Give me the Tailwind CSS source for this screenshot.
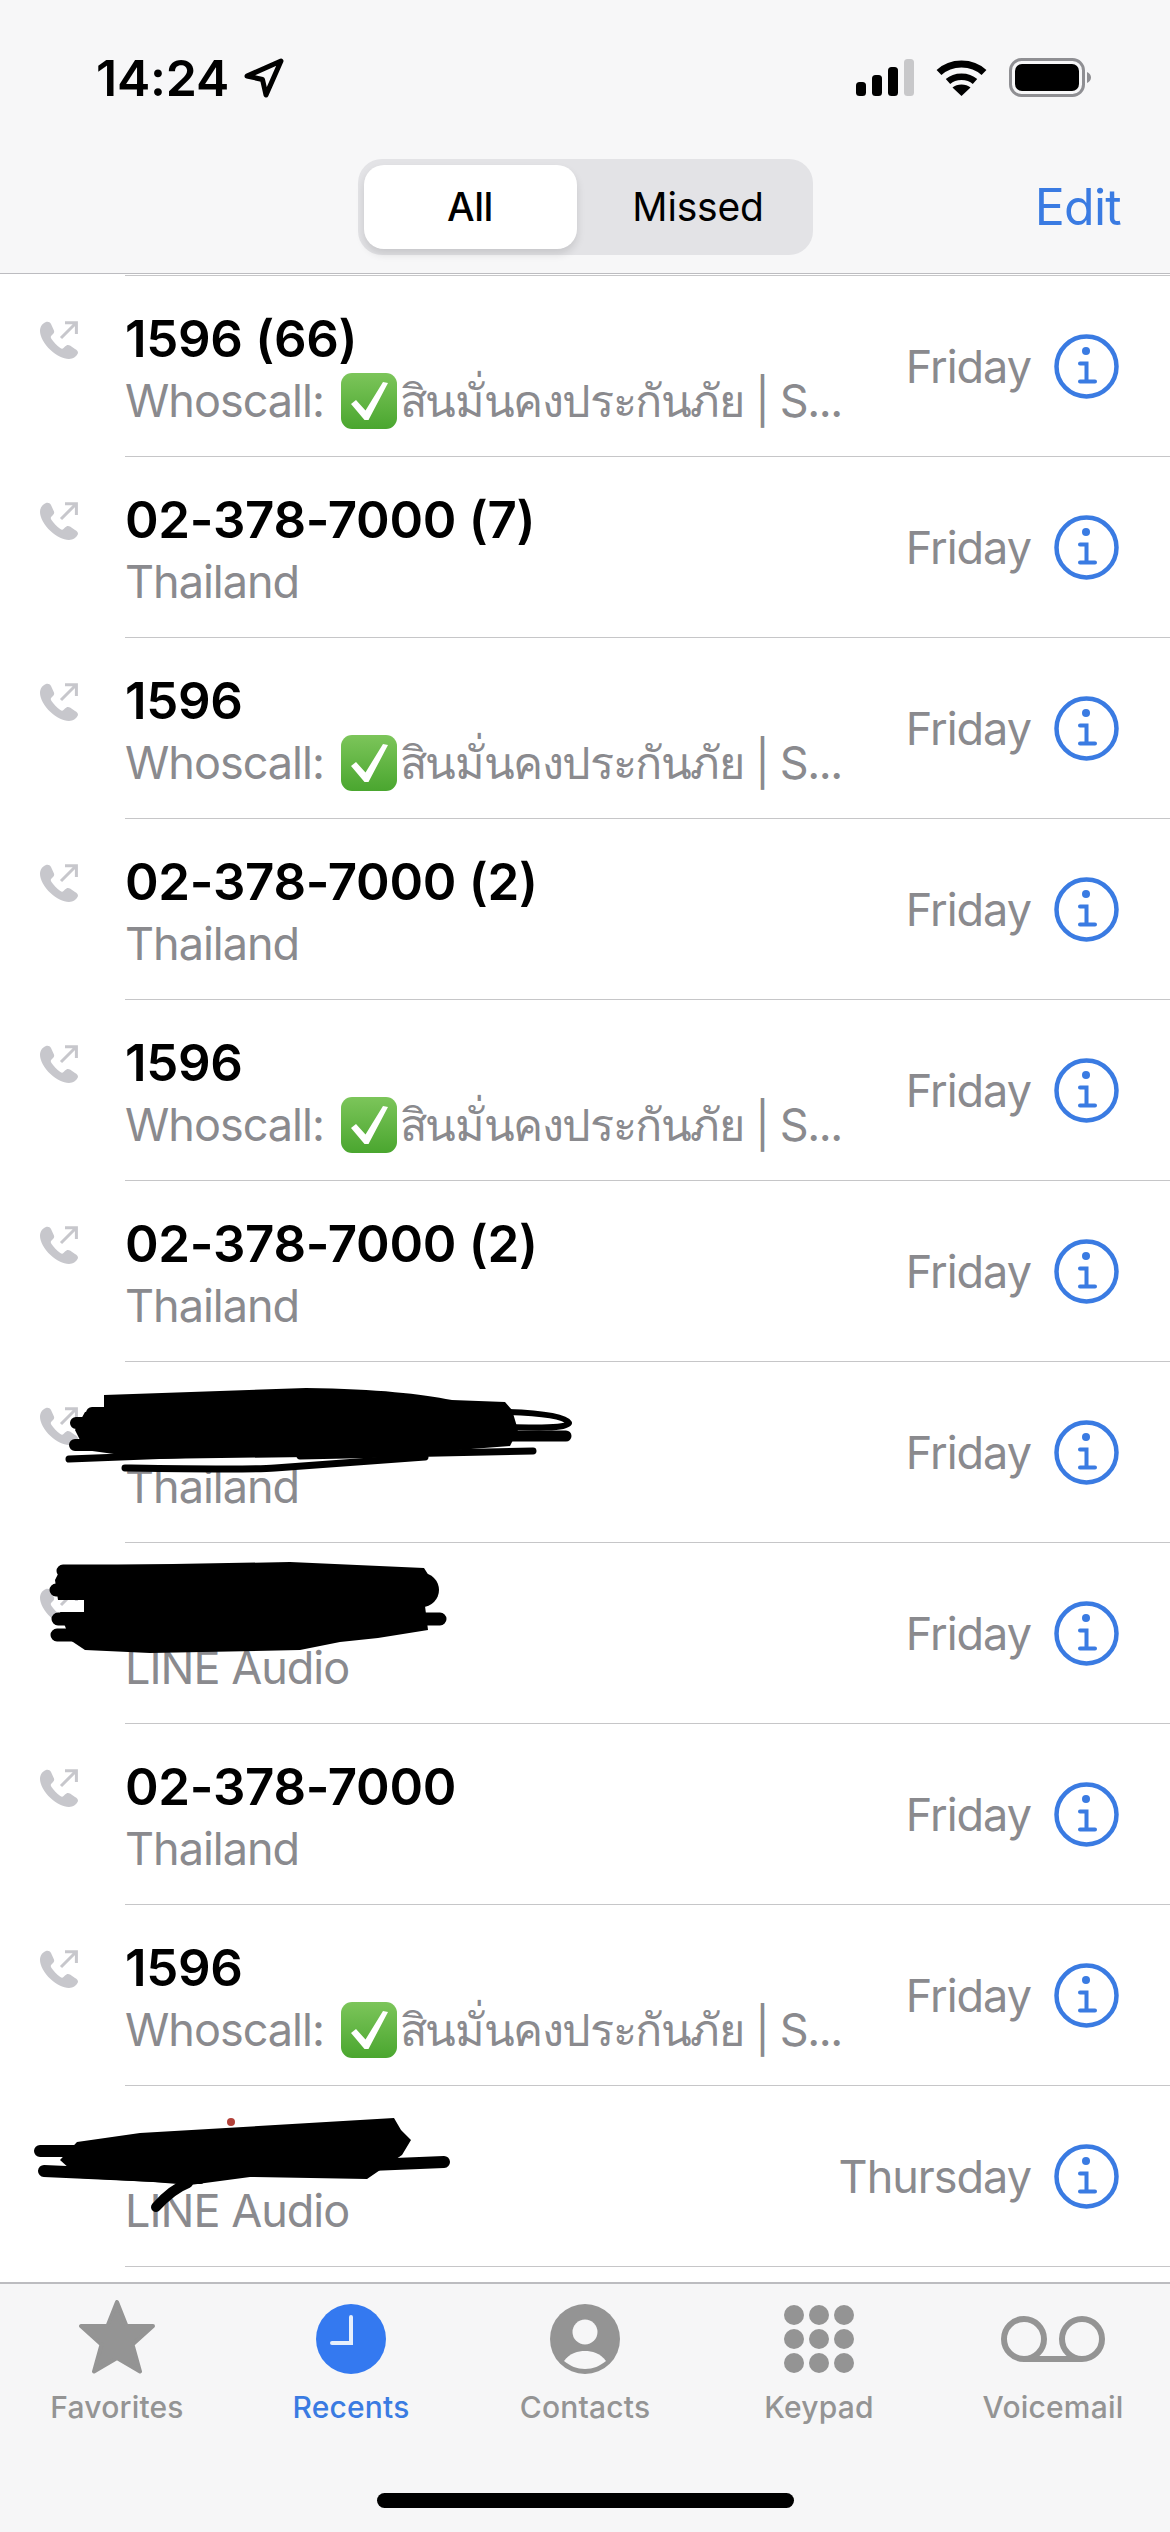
<!DOCTYPE html>
<html lang="en">
<head>
<meta charset="utf-8">
<title>Recents</title>
<script src="https://cdn.jsdelivr.net/npm/@tailwindcss/browser@4"></script>
</head>
<body class="m-0 bg-white">
<svg width="0" height="0" class="absolute">
  <defs>
    <symbol id="phone" viewBox="0 0 38 38">
      <path fill="#c7c7cc" d="M6 1C3 2 0 5 0 10C0 15 4 23 10.500 29C16.500 34.500 23 38 29 38C33 38 37 35 38 32C38 30 37 29 35 28L30 24.500C28 23.500 26.500 24 25 25.500L23.500 27C22.500 28 21.500 27.800 20 26.800C17 24.500 13.500 21 11.500 18C10.500 16.500 10.500 15.500 11.500 14.500L13 13C14.500 11.500 14.500 10 13.500 8.500L11 3C10 1 8 0.500 6 1Z"/>
      <path fill="none" stroke="#c7c7cc" stroke-width="3" d="M21 17L36 2M25 1.700H36.400V13"/>
    </symbol>
    <symbol id="info" viewBox="0 0 65 65">
      <circle cx="32.500" cy="32.500" r="30" fill="none" stroke="#3a7be2" stroke-width="4.500"/>
      <circle cx="32" cy="17" r="4" fill="#3a7be2"/>
      <path fill="none" stroke="#3a7be2" stroke-width="4" stroke-linecap="round" d="M26 29.500H32.500V47.500M26 47.500H41"/>
    </symbol>
    <symbol id="check" viewBox="0 0 56 56">
      <defs><linearGradient id="g" x1="0" y1="0" x2="0" y2="1"><stop offset="0" stop-color="#7cc55a"/><stop offset="1" stop-color="#4aa62f"/></linearGradient></defs>
      <rect width="56" height="56" rx="11" fill="url(#g)"/>
      <path fill="#fff" d="M10 31L15 27L24.500 37.500L42 9L47 10L27.500 47H23.500Z"/>
    </symbol>
  </defs>
</svg>

<div class="relative flex h-[2532px] w-[1170px] flex-col overflow-hidden bg-white font-['Inter','Noto_Sans','DejaVu_Sans',sans-serif] text-black">

  <header class="h-[274px] shrink-0 border-b border-[#bcbcc0] bg-[#f7f7f8]">
    <div class="flex h-[159px] items-start justify-between pt-[52px] pr-[79px] pl-[96px]">
      <div class="flex items-center gap-[15px]">
        <span class="text-[50px] leading-[52px] font-semibold tracking-[-0.2px]">14:24</span>
        <svg class="h-[40px] w-[40px]" viewBox="0 0 40 40"><path fill="none" stroke="#000" stroke-width="5" stroke-linejoin="round" d="M3 18L37 3L22 37L18.500 21.500Z"/></svg>
      </div>
      <div class="flex items-center gap-[22px] pt-[6px]">
        <svg class="h-[37px] w-[58px]" viewBox="0 0 58 37">
          <rect x="0" y="23" width="10" height="14" rx="3.500" fill="#000"/>
          <rect x="16" y="16" width="10" height="21" rx="3.500" fill="#000"/>
          <rect x="32" y="8" width="10" height="29" rx="3.500" fill="#000"/>
          <rect x="48" y="0" width="10" height="37" rx="3.500" fill="#c8c8ca"/>
        </svg>
        <svg class="h-[37px] w-[51px]" viewBox="0 0 51 37">
          <path fill="none" stroke="#000" stroke-width="7" d="M3 13.500C15 2 36 2 48 13.500"/>
          <path fill="none" stroke="#000" stroke-width="6.500" d="M12 22.500C19 16 32 16 39 22.500"/>
          <path fill="#000" d="M25.500 37L16.500 28.500C21 24.500 30 24.500 34.500 28.500Z"/>
        </svg>
        <svg class="h-[39px] w-[82px]" viewBox="0 0 82 39">
          <rect x="1.500" y="1.500" width="73" height="36" rx="11" fill="none" stroke="#8f8f93" stroke-width="3"/>
          <rect x="6" y="6" width="64" height="27" rx="7" fill="#000"/>
          <path fill="#8f8f93" d="M78 14C80.500 15 82 17 82 19.500C82 22 80.500 24 78 25Z"/>
        </svg>
      </div>
    </div>
    <nav class="relative flex h-[96px] items-center justify-center">
      <div class="flex h-[96px] w-[455px] rounded-[24px] bg-[#e3e3e6] p-[6px]">
        <div class="flex w-[213px] items-center justify-center rounded-[20px] bg-white text-[39px] font-medium tracking-[-0.5px] shadow-[0_5px_8px_rgba(0,0,0,0.12)]">All</div>
        <div class="flex flex-1 items-center justify-center pl-[13px] text-[39px] tracking-[-0.2px]">Missed</div>
      </div>
      <span class="absolute top-[18px] right-[49px] text-[50px] leading-[60px] tracking-[-0.7px] text-[#3a7be2]">Edit</span>
    </nav>
  </header>

  <main class="h-[2008px] shrink-0 bg-white pt-px">
    <!-- row 1 -->
    <div class="flex h-[181px]">
      <div class="w-[125px] shrink-0 pt-[46px] pl-[40px]"><svg class="h-[38px] w-[38px]"><use href="#phone"/></svg></div>
      <div class="flex min-w-0 flex-1 items-center border-t border-[#c6c6c8] pr-[51px]">
        <div class="min-w-0 flex-1 pt-[5px]">
          <div class="text-[51px] leading-[62px] font-semibold tracking-[-0.3px]">1596 (66)</div>
          <div class="mt-[2px] flex h-[58px] items-center text-[45px] tracking-[-1px] whitespace-nowrap text-[#8a8a8e]">Whoscall:<svg class="mr-[3px] ml-[17px] h-[56px] w-[56px] shrink-0"><use href="#check"/></svg><span class="tracking-[-1.4px]">สินมั่นคงประกันภัย | S...</span></div>
        </div>
        <span class="pt-[2px] text-[45px] tracking-[-1px] text-[#8a8a8e]">Friday</span>
        <svg class="ml-[23px] h-[65px] w-[65px] shrink-0"><use href="#info"/></svg>
      </div>
    </div>
    <!-- row 2 -->
    <div class="flex h-[181px]">
      <div class="w-[125px] shrink-0 pt-[46px] pl-[40px]"><svg class="h-[38px] w-[38px]"><use href="#phone"/></svg></div>
      <div class="flex min-w-0 flex-1 items-center border-t border-[#c6c6c8] pr-[51px]">
        <div class="min-w-0 flex-1 pt-[5px]">
          <div class="text-[51px] leading-[62px] font-semibold tracking-[-0.3px]">02-378-7000 (7)</div>
          <div class="mt-[2px] flex h-[58px] items-center text-[45px] tracking-[-1px] whitespace-nowrap text-[#8a8a8e]">Thailand</div>
        </div>
        <span class="pt-[2px] text-[45px] tracking-[-1px] text-[#8a8a8e]">Friday</span>
        <svg class="ml-[23px] h-[65px] w-[65px] shrink-0"><use href="#info"/></svg>
      </div>
    </div>
    <!-- row 3 -->
    <div class="flex h-[181px]">
      <div class="w-[125px] shrink-0 pt-[46px] pl-[40px]"><svg class="h-[38px] w-[38px]"><use href="#phone"/></svg></div>
      <div class="flex min-w-0 flex-1 items-center border-t border-[#c6c6c8] pr-[51px]">
        <div class="min-w-0 flex-1 pt-[5px]">
          <div class="text-[51px] leading-[62px] font-semibold tracking-[-0.3px]">1596</div>
          <div class="mt-[2px] flex h-[58px] items-center text-[45px] tracking-[-1px] whitespace-nowrap text-[#8a8a8e]">Whoscall:<svg class="mr-[3px] ml-[17px] h-[56px] w-[56px] shrink-0"><use href="#check"/></svg><span class="tracking-[-1.4px]">สินมั่นคงประกันภัย | S...</span></div>
        </div>
        <span class="pt-[2px] text-[45px] tracking-[-1px] text-[#8a8a8e]">Friday</span>
        <svg class="ml-[23px] h-[65px] w-[65px] shrink-0"><use href="#info"/></svg>
      </div>
    </div>
    <!-- row 4 -->
    <div class="flex h-[181px]">
      <div class="w-[125px] shrink-0 pt-[46px] pl-[40px]"><svg class="h-[38px] w-[38px]"><use href="#phone"/></svg></div>
      <div class="flex min-w-0 flex-1 items-center border-t border-[#c6c6c8] pr-[51px]">
        <div class="min-w-0 flex-1 pt-[5px]">
          <div class="text-[51px] leading-[62px] font-semibold tracking-[-0.3px]">02-378-7000 (2)</div>
          <div class="mt-[2px] flex h-[58px] items-center text-[45px] tracking-[-1px] whitespace-nowrap text-[#8a8a8e]">Thailand</div>
        </div>
        <span class="pt-[2px] text-[45px] tracking-[-1px] text-[#8a8a8e]">Friday</span>
        <svg class="ml-[23px] h-[65px] w-[65px] shrink-0"><use href="#info"/></svg>
      </div>
    </div>
    <!-- row 5 -->
    <div class="flex h-[181px]">
      <div class="w-[125px] shrink-0 pt-[46px] pl-[40px]"><svg class="h-[38px] w-[38px]"><use href="#phone"/></svg></div>
      <div class="flex min-w-0 flex-1 items-center border-t border-[#c6c6c8] pr-[51px]">
        <div class="min-w-0 flex-1 pt-[5px]">
          <div class="text-[51px] leading-[62px] font-semibold tracking-[-0.3px]">1596</div>
          <div class="mt-[2px] flex h-[58px] items-center text-[45px] tracking-[-1px] whitespace-nowrap text-[#8a8a8e]">Whoscall:<svg class="mr-[3px] ml-[17px] h-[56px] w-[56px] shrink-0"><use href="#check"/></svg><span class="tracking-[-1.4px]">สินมั่นคงประกันภัย | S...</span></div>
        </div>
        <span class="pt-[2px] text-[45px] tracking-[-1px] text-[#8a8a8e]">Friday</span>
        <svg class="ml-[23px] h-[65px] w-[65px] shrink-0"><use href="#info"/></svg>
      </div>
    </div>
    <!-- row 6 -->
    <div class="flex h-[181px]">
      <div class="w-[125px] shrink-0 pt-[46px] pl-[40px]"><svg class="h-[38px] w-[38px]"><use href="#phone"/></svg></div>
      <div class="flex min-w-0 flex-1 items-center border-t border-[#c6c6c8] pr-[51px]">
        <div class="min-w-0 flex-1 pt-[5px]">
          <div class="text-[51px] leading-[62px] font-semibold tracking-[-0.3px]">02-378-7000 (2)</div>
          <div class="mt-[2px] flex h-[58px] items-center text-[45px] tracking-[-1px] whitespace-nowrap text-[#8a8a8e]">Thailand</div>
        </div>
        <span class="pt-[2px] text-[45px] tracking-[-1px] text-[#8a8a8e]">Friday</span>
        <svg class="ml-[23px] h-[65px] w-[65px] shrink-0"><use href="#info"/></svg>
      </div>
    </div>
    <!-- row 7 (name scribbled out) -->
    <div class="flex h-[181px]">
      <div class="w-[125px] shrink-0 pt-[46px] pl-[40px]"><svg class="h-[38px] w-[38px]"><use href="#phone"/></svg></div>
      <div class="flex min-w-0 flex-1 items-center border-t border-[#c6c6c8] pr-[51px]">
        <div class="min-w-0 flex-1 pt-[5px]">
          <div class="h-[62px]"></div>
          <div class="mt-[2px] flex h-[58px] items-center text-[45px] tracking-[-1px] whitespace-nowrap text-[#8a8a8e]">Thailand</div>
        </div>
        <span class="pt-[2px] text-[45px] tracking-[-1px] text-[#8a8a8e]">Friday</span>
        <svg class="ml-[23px] h-[65px] w-[65px] shrink-0"><use href="#info"/></svg>
      </div>
    </div>
    <!-- row 8 (name scribbled out) -->
    <div class="flex h-[181px]">
      <div class="w-[125px] shrink-0 pt-[46px] pl-[40px]"><svg class="h-[38px] w-[38px]"><use href="#phone"/></svg></div>
      <div class="flex min-w-0 flex-1 items-center border-t border-[#c6c6c8] pr-[51px]">
        <div class="min-w-0 flex-1 pt-[5px]">
          <div class="h-[62px]"></div>
          <div class="mt-[2px] flex h-[58px] items-center text-[45px] tracking-[-1px] whitespace-nowrap text-[#8a8a8e]">LINE Audio</div>
        </div>
        <span class="pt-[2px] text-[45px] tracking-[-1px] text-[#8a8a8e]">Friday</span>
        <svg class="ml-[23px] h-[65px] w-[65px] shrink-0"><use href="#info"/></svg>
      </div>
    </div>
    <!-- row 9 -->
    <div class="flex h-[181px]">
      <div class="w-[125px] shrink-0 pt-[46px] pl-[40px]"><svg class="h-[38px] w-[38px]"><use href="#phone"/></svg></div>
      <div class="flex min-w-0 flex-1 items-center border-t border-[#c6c6c8] pr-[51px]">
        <div class="min-w-0 flex-1 pt-[5px]">
          <div class="text-[51px] leading-[62px] font-semibold tracking-[-0.3px]">02-378-7000</div>
          <div class="mt-[2px] flex h-[58px] items-center text-[45px] tracking-[-1px] whitespace-nowrap text-[#8a8a8e]">Thailand</div>
        </div>
        <span class="pt-[2px] text-[45px] tracking-[-1px] text-[#8a8a8e]">Friday</span>
        <svg class="ml-[23px] h-[65px] w-[65px] shrink-0"><use href="#info"/></svg>
      </div>
    </div>
    <!-- row 10 -->
    <div class="flex h-[181px]">
      <div class="w-[125px] shrink-0 pt-[46px] pl-[40px]"><svg class="h-[38px] w-[38px]"><use href="#phone"/></svg></div>
      <div class="flex min-w-0 flex-1 items-center border-t border-[#c6c6c8] pr-[51px]">
        <div class="min-w-0 flex-1 pt-[5px]">
          <div class="text-[51px] leading-[62px] font-semibold tracking-[-0.3px]">1596</div>
          <div class="mt-[2px] flex h-[58px] items-center text-[45px] tracking-[-1px] whitespace-nowrap text-[#8a8a8e]">Whoscall:<svg class="mr-[3px] ml-[17px] h-[56px] w-[56px] shrink-0"><use href="#check"/></svg><span class="tracking-[-1.4px]">สินมั่นคงประกันภัย | S...</span></div>
        </div>
        <span class="pt-[2px] text-[45px] tracking-[-1px] text-[#8a8a8e]">Friday</span>
        <svg class="ml-[23px] h-[65px] w-[65px] shrink-0"><use href="#info"/></svg>
      </div>
    </div>
    <!-- row 11 (name scribbled out) -->
    <div class="flex h-[181px]">
      <div class="w-[125px] shrink-0"></div>
      <div class="flex min-w-0 flex-1 items-center border-t border-[#c6c6c8] pr-[51px]">
        <div class="min-w-0 flex-1 pt-[5px]">
          <div class="h-[62px]"></div>
          <div class="mt-[2px] flex h-[58px] items-center text-[45px] tracking-[-1px] whitespace-nowrap text-[#8a8a8e]">LINE Audio</div>
        </div>
        <span class="pt-[2px] text-[45px] tracking-[-1px] text-[#8a8a8e]">Thursday</span>
        <svg class="ml-[23px] h-[65px] w-[65px] shrink-0"><use href="#info"/></svg>
      </div>
    </div>
    <div class="ml-[125px] border-t border-[#c6c6c8]"></div>
  </main>

  <footer class="relative h-[250px] shrink-0 border-t-2 border-[#bcbcc0] bg-[#f6f6f7]">
    <div class="grid grid-cols-5 text-[30px] font-medium tracking-[0.2px] text-[#949494]">
      <div class="flex flex-col items-center">
        <svg class="mt-[16px] h-[74px] w-[76px]" viewBox="0 0 76 74"><path fill="#949494" stroke="#949494" stroke-width="4" stroke-linejoin="round" d="M38 2L47.500 26H74L53.500 44.500L61 71.500L38 58L15 71.500L22.500 44.500L2 26H28.500Z"/></svg>
        <span class="mt-[15px] leading-[36px]">Favorites</span>
      </div>
      <div class="flex flex-col items-center text-[#3a7be2]">
        <svg class="mt-[20px] h-[70px] w-[70px]" viewBox="0 0 70 70"><circle cx="35" cy="35" r="35" fill="#3479f0"/><path fill="none" stroke="#e6effc" stroke-width="4" stroke-linecap="round" d="M35 13V39H16"/></svg>
        <span class="mt-[15px] leading-[36px]">Recents</span>
      </div>
      <div class="flex flex-col items-center">
        <svg class="mt-[20px] h-[70px] w-[70px]" viewBox="0 0 70 70"><circle cx="35" cy="35" r="35" fill="#949494"/><circle cx="35" cy="28" r="12.500" fill="#f6f6f7"/><path fill="#f6f6f7" d="M14 57C20 49 28 47 35 47C42 47 50 49 56 57C50 62 43 65 35 65C27 65 20 62 14 57Z"/></svg>
        <span class="mt-[15px] leading-[36px]">Contacts</span>
      </div>
      <div class="flex flex-col items-center">
        <svg class="mt-[20px] h-[70px] w-[70px]" viewBox="0 0 70 70" fill="#949494">
          <circle cx="10" cy="11" r="10"/><circle cx="35" cy="11" r="10"/><circle cx="60" cy="11" r="10"/>
          <circle cx="10" cy="35" r="10"/><circle cx="35" cy="35" r="10"/><circle cx="60" cy="35" r="10"/>
          <circle cx="10" cy="59" r="10"/><circle cx="35" cy="59" r="10"/><circle cx="60" cy="59" r="10"/>
        </svg>
        <span class="mt-[15px] leading-[36px]">Keypad</span>
      </div>
      <div class="flex flex-col items-center">
        <svg class="mt-[20px] h-[70px] w-[104px]" viewBox="0 0 104 70"><g fill="none" stroke="#949494" stroke-width="6"><circle cx="23" cy="35" r="20"/><circle cx="81" cy="35" r="20"/><path d="M23 55H81"/></g></svg>
        <span class="mt-[15px] leading-[36px]">Voicemail</span>
      </div>
    </div>
    <div class="absolute top-[209px] left-[377px] h-[15px] w-[417px] rounded-full bg-black"></div>
  </footer>

  <!-- scribbles over the redacted names -->
  <svg class="pointer-events-none absolute top-0 left-0 h-[2532px] w-[1170px]" viewBox="0 0 1170 2532" fill="none" stroke="#000" stroke-linecap="round" stroke-linejoin="round">
    <path fill="#000" stroke="none" d="M104 1395L306 1388C380 1389 420 1394 452 1400L505 1402L512 1410L518 1430L510 1446L380 1456L150 1459L85 1450L75 1430L85 1412L104 1408Z"/>
    <path stroke-width="12" d="M110 1401H300M92 1413H300M76 1423H300M75 1445H300"/>
    <path stroke-width="6" d="M505 1412C540 1413 565 1416 569 1423C565 1429 535 1428 505 1427"/>
    <path stroke-width="11" d="M505 1436H566"/>
    <path stroke-width="7" d="M69 1459L300 1450M300 1456L533 1451"/>
    <path stroke-width="7" d="M125 1468C190 1469 250 1470 275 1468L425 1457"/>
    <path fill="#000" stroke="none" d="M62 1566L290 1562L424 1568L438 1590L425 1606L428 1630L378 1638L340 1642L300 1650L150 1653L85 1650L70 1640L60 1612H84V1600L58 1600L55 1580Z"/>
    <path stroke-width="13" d="M63 1571H300M56 1590H200M58 1619H200M57 1635H200M425 1619H440"/>
    <path stroke-width="34" d="M300 1590H422"/>
    <path fill="#000" stroke="none" d="M77 2142L140 2133L394 2118L401 2130L411 2140L402 2155L367 2179L250 2177L190 2185L153 2182L80 2178L60 2160Z"/>
    <path stroke-width="12" d="M40 2151H90M44 2171L200 2178M200 2172L444 2162"/>
    <path stroke-width="10" d="M188 2183C175 2188 165 2197 156 2207"/>
    <circle cx="231" cy="2122" r="4" fill="#b3423a" stroke="none"/>
  </svg>
</div>
</body>
</html>
